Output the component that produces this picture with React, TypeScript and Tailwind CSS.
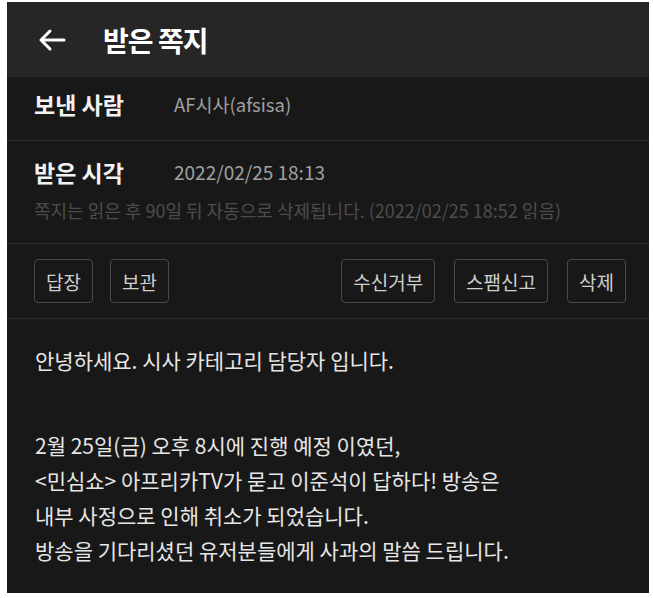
const font = {
  fontFamily: '"Noto Sans CJK KR", "Noto Sans", sans-serif',
}

const Btn = ({ label }: { label: string }) => (
  <button className="h-[44px] rounded-[4px] border border-[#4a4a4a] px-[11px] text-[19px] leading-none text-[#cfcfcf]">
    {label}
  </button>
)

const App = () => {
  return (
    <div className="min-h-screen bg-white pl-[7px] pt-[2px]">
      <div
        className="h-[591px] w-[642px] overflow-hidden bg-[#181818]"
        style={font}
      >
        {/* header */}
        <header className="flex h-[75px] items-center bg-[#262626] pl-[31px]">
          <svg
            width="28"
            height="24"
            viewBox="0 0 28 24"
            fill="none"
            stroke="white"
            strokeWidth="3"
            strokeLinecap="round"
            strokeLinejoin="round"
          >
            <path d="M26 12H3M12 3L3 12L12 21" />
          </svg>
          <h1 className="ml-[37px] text-[28px] font-bold tracking-[-1px] text-white">
            받은 쪽지
          </h1>
        </header>

        {/* sender */}
        <div className="flex h-[64px] border-b border-[#2c2c2c] px-[27px] pt-[15px]">
          <span className="w-[140px] text-[23px] font-bold leading-[24px] text-[#f2f2f2]">
            보낸 사람
          </span>
          <span className="text-[18.5px] leading-[24px] text-[#a0a0a0]">
            AF시사(afsisa)
          </span>
        </div>

        {/* received time */}
        <div className="border-b border-[#2c2c2c] px-[27px] pb-[23px] pt-[19px]">
          <div className="flex">
            <span className="w-[140px] text-[23px] font-bold leading-[24px] text-[#f2f2f2]">
              받은 시각
            </span>
            <span className="text-[19px] leading-[24px] text-[#a0a0a0]">
              2022/02/25 18:13
            </span>
          </div>
          <p className="mt-[16px] text-[18px] leading-[20px] text-[#4d4d4d]">
            쪽지는 읽은 후 90일 뒤 자동으로 삭제됩니다. (2022/02/25 18:52 읽음)
          </p>
        </div>

        {/* actions */}
        <div className="flex items-center justify-between border-b border-[#2c2c2c] py-[15px] pl-[27px] pr-[23px]">
          <div className="flex gap-[17px]">
            <Btn label="답장" />
            <Btn label="보관" />
          </div>
          <div className="flex gap-[19px]">
            <Btn label="수신거부" />
            <Btn label="스팸신고" />
            <Btn label="삭제" />
          </div>
        </div>

        {/* message */}
        <div className="px-[28px] pt-[24px] text-[21px] leading-[35px] text-[#e6e6e6]">
          <p>안녕하세요. 시사 카테고리 담당자 입니다.</p>
          <p className="mt-[50px]">
            2월 25일(금) 오후 8시에 진행 예정 이였던,
            <br />
            &lt;민심쇼&gt; 아프리카TV가 묻고 이준석이 답하다! 방송은
            <br />
            내부 사정으로 인해 취소가 되었습니다.
            <br />
            방송을 기다리셨던 유저분들에게 사과의 말씀 드립니다.
          </p>
        </div>
      </div>
    </div>
  )
}

export default App
